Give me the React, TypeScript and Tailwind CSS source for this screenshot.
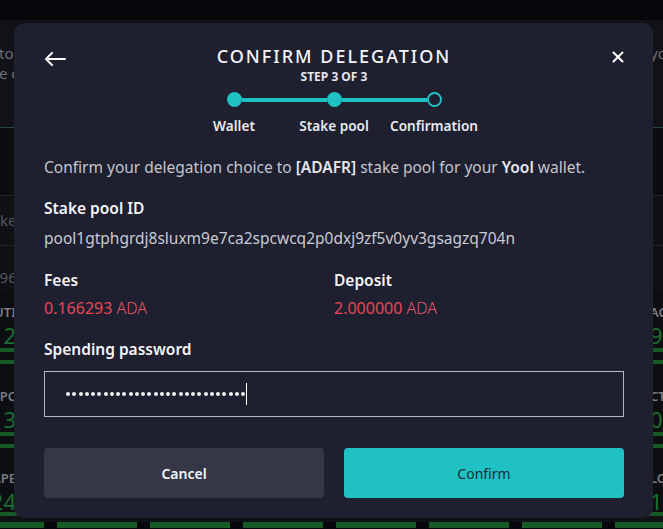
import React from "react";

const teal = "bg-[#1fc1c3]";

function ArrowLeftIcon() {
  return (
    <svg width="22" height="14" viewBox="0 0 22 14" fill="none" stroke="#ffffff" strokeWidth="2" strokeLinecap="round" strokeLinejoin="round">
      <path d="M2 7h19M8 1L2 7l6 6" />
    </svg>
  );
}

function CloseIcon() {
  return (
    <svg width="12" height="12" viewBox="0 0 12 12" fill="none" stroke="#ffffff" strokeWidth="2" strokeLinecap="round">
      <path d="M1.5 1.5l9 9M10.5 1.5l-9 9" />
    </svg>
  );
}

function StatRow({
  labelL,
  numL,
  labelR,
  numR,
  bars = 2,
  height,
}: {
  labelL: string;
  numL: string;
  labelR: string;
  numR: string;
  bars?: number;
  height: string;
}) {
  return (
    <div className={`flex flex-col bg-[#0d0e11] ${height}`}>
      <div className="flex justify-between pt-[12px]">
        <div className="flex w-[16px] flex-col items-end whitespace-nowrap">
          <span className="text-[13px] leading-[16px] font-semibold text-[#7c7d83]">{labelL}</span>
          <span className="mt-[2px] text-[22px] leading-[26px] text-[#1b6e2f]">{numL}</span>
        </div>
        <div className="flex w-[13px] flex-col whitespace-nowrap">
          <span className="text-[13px] leading-[16px] font-semibold text-[#7c7d83]">{labelR}</span>
          <span className="mt-[2px] text-[22px] leading-[26px] text-[#1b6e2f]">{numR}</span>
        </div>
      </div>
      {bars > 0 && (
        <div className="flex flex-col gap-[8px]">
          {Array.from({ length: bars }).map((_, i) => (
            <div key={i} className="h-[4px] w-full bg-[#185a25]" />
          ))}
        </div>
      )}
    </div>
  );
}

function Background() {
  return (
    <div className="flex h-full w-full flex-col text-[15px]">
      <div className="h-[20px] bg-[#06070a]" />
      <div className="h-[108px] border-b border-[#2a4649] bg-[#111217] pt-[23px] leading-[20px] text-[#6e6f76]">
        <div className="flex justify-between whitespace-nowrap">
          <span className="-ml-[1px]">to</span>
          <span className="w-[13px]">yo</span>
        </div>
        <div className="whitespace-nowrap">
          <span className="-ml-[1px]">e delegation</span>
        </div>
      </div>
      <div className="h-[68px] border-b border-[#222328] bg-[#0c0d10]" />
      <div className="flex h-[50px] items-center border-b border-[#222328] bg-[#101115] whitespace-nowrap text-[#55565c]">
        <span className="-ml-[22px]">Stake pool</span>
      </div>
      <div className="flex h-[46px] items-center bg-[#0f1013] pt-[16px] whitespace-nowrap text-[#55565c]">
        <span className="-ml-[9px]">296</span>
      </div>
      <StatRow labelL="UTI" numL="2" labelR="AC" numR="9" height="h-[84px]" />
      <StatRow labelL="PC" numL="3" labelR="CT" numR="0" height="h-[82px]" />
      <StatRow labelL="APE" numL="24" labelR="LO" numR="1" bars={0} height="h-[54px]" />
      <div className="h-[4px] bg-[#185a25]" />
      <div className="h-[6px] bg-[#111215]" />
      <div className="flex h-[6px] gap-[13px] bg-[#06070a]">
        <div className="w-[44px] bg-[#185a25]" />
        {Array.from({ length: 6 }).map((_, i) => (
          <div key={i} className="w-[80px] bg-[#185a25]" />
        ))}
        <div className="flex-1 bg-[#185a25]" />
      </div>
    </div>
  );
}

export default function App() {
  const dots = Array.from({ length: 29 });
  return (
    <div className="relative h-[529px] w-[663px] overflow-hidden bg-[#06070a] font-['Noto_Sans',sans-serif]">
      <Background />

      <div className="absolute left-[14px] top-[23px] w-[639px] rounded-[10px] bg-[#1e1f2f] pb-[20px] pl-[30px] pr-[29px] pt-[21px] text-white">
        <div className="grid grid-cols-[1fr_auto_1fr] items-start">
          <div className="mt-[8px]">
            <ArrowLeftIcon />
          </div>
          <h1 className="text-[18px] leading-[24px] font-medium tracking-[2px] text-[#f4f4f7]">
            CONFIRM DELEGATION
          </h1>
          <div className="mt-[7px] flex justify-end">
            <CloseIcon />
          </div>
        </div>
        <div className="mt-[3px] text-center text-[12px] leading-[12px] font-bold text-[#e6e6eb]">
          STEP 3 OF 3
        </div>

        <div className="mx-auto mt-[9px] flex h-[15px] w-[215px] items-center">
          <div className={`h-[15px] w-[15px] shrink-0 rounded-full ${teal}`} />
          <div className={`h-[4px] flex-1 ${teal}`} />
          <div className={`h-[15px] w-[15px] shrink-0 rounded-full ${teal}`} />
          <div className={`h-[4px] flex-1 ${teal}`} />
          <div className="h-[15px] w-[15px] shrink-0 rounded-full border-2 border-[#1fc1c3] bg-[#1e1f2f]" />
        </div>
        <div className="mx-auto mt-[10px] grid w-[300px] grid-cols-3 text-center text-[13.6px] leading-[18px] font-semibold text-[#e9e9ee] whitespace-nowrap">
          <span>Wallet</span>
          <span>Stake pool</span>
          <span>Confirmation</span>
        </div>

        <p className="mt-[21px] text-[15.5px] leading-[22px] text-[#c4c5cd]">
          Confirm your delegation choice to{" "}
          <span className="font-semibold text-[#e4e5ea]">[ADAFR]</span> stake pool for your{" "}
          <span className="font-semibold text-[#e4e5ea]">Yool</span> wallet.
        </p>

        <div className="mt-[19px] text-[15.5px] leading-[22px] font-semibold text-[#f4f4f7]">Stake pool ID</div>
        <div className="mt-[8px] text-[15.5px] leading-[22px] text-[#c9cad2]">
          pool1gtphgrdj8sluxm9e7ca2spcwcq2p0dxj9zf5v0yv3gsagzq704n
        </div>

        <div className="mt-[20px] grid grid-cols-2">
          <div>
            <div className="text-[15.5px] leading-[22px] font-semibold text-[#f4f4f7]">Fees</div>
            <div className="mt-[6px] text-[16px] leading-[22px] text-[#e8475b]">
              0.166293 <span className="font-light text-[#e2586a]">ADA</span>
            </div>
          </div>
          <div>
            <div className="text-[15.5px] leading-[22px] font-semibold text-[#f4f4f7]">Deposit</div>
            <div className="mt-[6px] text-[16px] leading-[22px] text-[#e8475b]">
              2.000000 <span className="font-light text-[#e2586a]">ADA</span>
            </div>
          </div>
        </div>

        <div className="mt-[19px] text-[15.5px] leading-[22px] font-semibold text-[#f4f4f7]">Spending password</div>
        <div className="mt-[11px] flex h-[46px] items-center border border-[#b7b8bf] pl-[21px]">
          <div className="flex items-center gap-[2.25px]">
            {dots.map((_, i) => (
              <span key={i} className="h-[4px] w-[4px] rounded-full bg-[#f0f0f3]" />
            ))}
          </div>
          <span className="ml-[1px] h-[22px] w-[1px] bg-white" />
        </div>

        <div className="mt-[31px] grid h-[50px] grid-cols-2 gap-[20px] text-[14px]">
          <button type="button" className="rounded-[4px] bg-[#363746] font-semibold text-[#f4f4f7]">
            Cancel
          </button>
          <button type="button" className="rounded-[4px] bg-[#1fc1c3] text-[#1d2a38]">
            Confirm
          </button>
        </div>
      </div>
    </div>
  );
}
